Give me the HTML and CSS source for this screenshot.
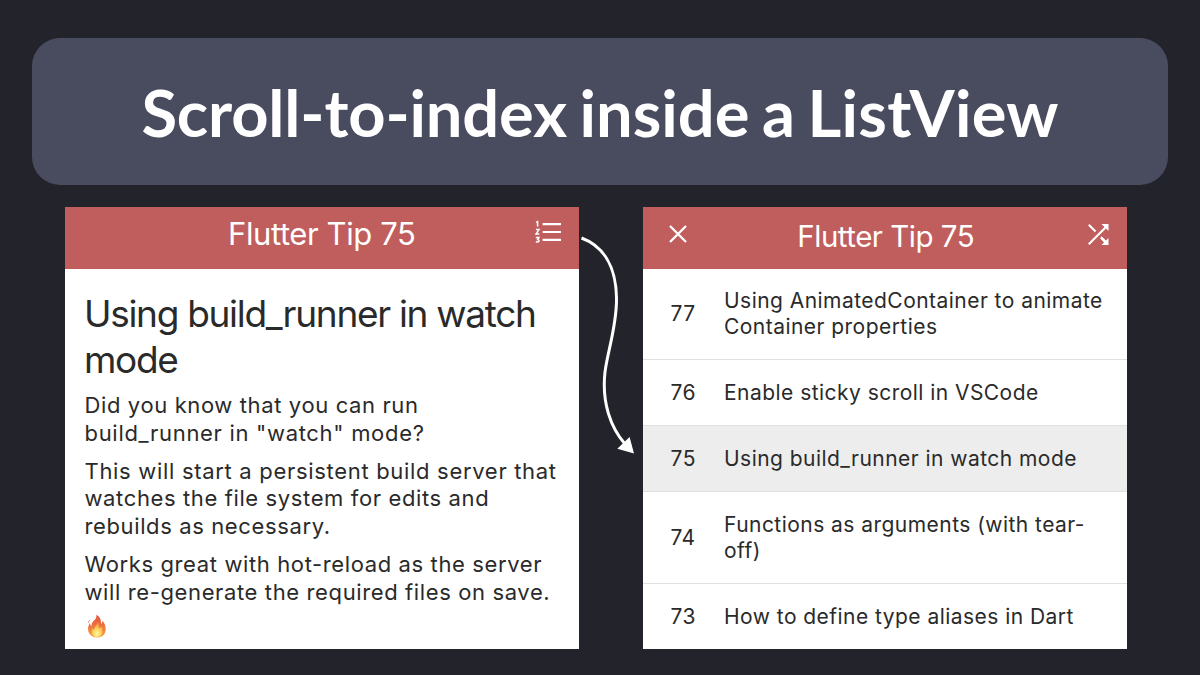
FILE: index.html
```html
<!DOCTYPE html>
<html lang="en">
<head>
<meta charset="utf-8">
<title>Scroll-to-index inside a ListView</title>
<link rel="stylesheet" href="styles.css">
</head>
<body>
<header class="banner"><h1 class="banner-title"><span class="tight">Scroll-to-index</span> inside a <span class="loose">ListView</span></h1></header>
<main class="screens">
  <section class="screen tip">
    <div class="bar">
      <h2 class="bar-title tip-title"><span>Flutter Tip 75</span></h2>
      <svg class="icon-list" viewBox="0 0 27 24" fill="none" stroke="#fff">
        <path d="M7.600 4.100H26M7.600 12H26M7.600 19.800H26" stroke-width="2.200"/>
        <path d="M1 2.400L2.600 1.600V6.600M.9 9.600H4L1.100 13.900H4.300M.8 17.500H3.900L2.600 19.600Q4.100 19.700 4 21Q3.700 22.200 .8 21.900" stroke-width="1.500"/>
      </svg>
    </div>
    <article class="tip-body">
      <h3 class="tip-heading"><span>Using build_runner in watch</span><br><span>mode</span></h3>
      <p><span>Did you know that you can run</span><br><span class="wide">build_runner in "watch" mode?</span></p>
      <p><span class="wide">This will start a persistent build server that</span><br><span>watches the file system for edits and</span><br><span>rebuilds as necessary.</span></p>
      <p><span>Works great with hot-reload as the server</span><br><span>will re-generate the required files on save.</span></p>
      <svg class="fire" viewBox="0 0 20 24">
        <defs>
          <linearGradient id="flame" x1="0" y1="0" x2="0" y2="1"><stop offset="0" stop-color="#e2533b"/><stop offset=".5" stop-color="#ee7440"/><stop offset="1" stop-color="#f8a43e"/></linearGradient>
          <radialGradient id="core" cx=".5" cy=".8" r=".7"><stop offset="0" stop-color="#fff6a8"/><stop offset=".5" stop-color="#fcd45c"/><stop offset="1" stop-color="#f69a45"/></radialGradient>
        </defs>
        <path fill="url(#flame)" d="M9.2.7C14 3 14.2 7 14 10c1-.8 1.500-2 1.500-3.300C18 9.500 19 13 18.600 16.500 18 21 14.500 23.500 10 23.500S1.500 20.500 1.100 16C.9 13 1.500 11 3 9c.1 1.500.5 2.500 1.300 3.200C4.600 8.500 6 7.500 8 5.500 9.300 4.200 9.700 2.500 9.200.7zM3.300 5.800C2.400 7.200 1.800 8.300 1.900 9.500.8 8.300 1.400 6.600 3.300 5.800z"/>
        <path fill="url(#core)" d="M10.500 8c1.700 2.600 1.500 5 1.300 6.500 1.100-.4 1.800-1.300 2-2.500 1.500 2 2.100 4.200 1.600 6.500-.5 2.900-2.600 4.500-5.400 4.500s-5.300-1.900-5.500-4.800c-.1-1.700.4-3 1.200-4.200.3 1 .8 1.600 1.500 2C7 12.500 10.300 11.500 10.500 8z"/>
      </svg>
    </article>
  </section>
  <section class="screen index">
    <div class="bar">
      <svg class="icon-close" viewBox="0 0 18 18" fill="none" stroke="#fff" stroke-width="2.300"><path d="M1 1L17 17M17 1L1 17"/></svg>
      <h2 class="bar-title index-title"><span>Flutter Tip 75</span></h2>
      <svg class="icon-shuffle" viewBox="0 0 21 21" fill="#fff"><path d="M1.500 0L8.300 6.800 6.800 8.300 0 1.500zM13.500 0H20.500V7L18 4.500 1.500 21 0 19.500 16.500 3zM13.600 12.200L18 16.500 20.500 14V21H13.500L16 18.500 12.100 14.300z"/></svg>
    </div>
    <ol class="list">
      <li class="row tall-first"><b>77</b><p><span>Using AnimatedContainer to animate</span><br><span>Container properties</span></p></li>
      <li class="row"><b>76</b><p><span>Enable sticky scroll in VSCode</span></p></li>
      <li class="row selected"><b>75</b><p><span>Using build_runner in watch mode</span></p></li>
      <li class="row tall"><b>74</b><p><span>Functions as arguments (with tear-</span><br><span>off)</span></p></li>
      <li class="row last"><b>73</b><p><span>How to define type aliases in Dart</span></p></li>
    </ol>
  </section>
</main>
<svg class="arrow" viewBox="0 0 60 225"><path d="M1.500 6C23 14 36 34 36.500 66C37 94 27.500 119 25 140C21.500 171 31 196 45 212" fill="none" stroke="#fff" stroke-width="3"/><path d="M54 221.500L49.600 205 37.300 216.800z" fill="#fff"/></svg>
</body>
</html>
```

FILE: styles.css
```css
* { box-sizing: border-box; }
body { margin: 0; width: 1200px; height: 675px; padding: 38px 32px 0; overflow: hidden; background: #22232b; font-family: Inter, "Liberation Sans", sans-serif; position: relative; }
h1, h2, h3, p, ol { margin: 0; padding: 0; font-weight: 400; white-space: nowrap; }
svg { display: block; flex: none; }
.banner { height: 147px; border-radius: 28px; background: #494b5f; display: flex; justify-content: center; align-items: center; }
.banner-title { color: #fff; font: 700 65px/78px Lato, sans-serif; word-spacing: -3.200px; }
.tight { letter-spacing: -0.15px; }
.loose { letter-spacing: 0.25px; }
.screens { display: flex; gap: 64px; padding: 22px 33px 0; }
.screen { height: 442px; background: #fff; color: #2a2a2a; overflow: hidden; }
.tip { width: 514px; }
.index { width: 484px; }
.bar { height: 62px; background: #c05d5d; color: #fff; display: flex; align-items: center; }
.tip .bar { height: 61.500px; padding: 0 17px 0 163px; justify-content: space-between; }
.index .bar { padding: 0 18px 0 25.500px; justify-content: space-between; }
.bar-title { font-size: 29.500px; line-height: 36px; letter-spacing: -0.5px; }
.index-title { padding: 0 3px 4px 0; }
.tip-title { font-size: 31px; padding-bottom: 7px; letter-spacing: -0.4px; }
.icon-list { width: 27px; height: 24px; margin-bottom: 12px; }
.icon-close { width: 18px; height: 18px; margin-bottom: 7.500px; }
.icon-shuffle { width: 21px; height: 21px; margin-bottom: 7px; }
.tip-body { padding: 22.500px 19.500px; font-size: 22px; line-height: 27.600px; letter-spacing: 0.62px; }
.tip-body p { margin-bottom: 10.500px; }
.wide { letter-spacing: 0.69px; }
.tip-heading { font-size: 37px; line-height: 46px; letter-spacing: -1.300px; margin-bottom: 9px; margin-left: -0.500px; }
.fire { width: 20px; height: 24px; margin-top: -3px; margin-left: 2px; }
.list { list-style: none; font-size: 21px; line-height: 26px; letter-spacing: 0.46px; }
.row { height: 66px; display: flex; align-items: center; border-bottom: 1px solid #e0e0e0; }
.row b { font-weight: 400; width: 81px; padding-left: 27.500px; flex: none; }
.tall-first { height: 91px; }
.selected { background: #ededed; }
.tall { height: 92px; }
.last { border-bottom: 0; }
.arrow { position: absolute; left: 580px; top: 232px; width: 60px; height: 225px; }
```
